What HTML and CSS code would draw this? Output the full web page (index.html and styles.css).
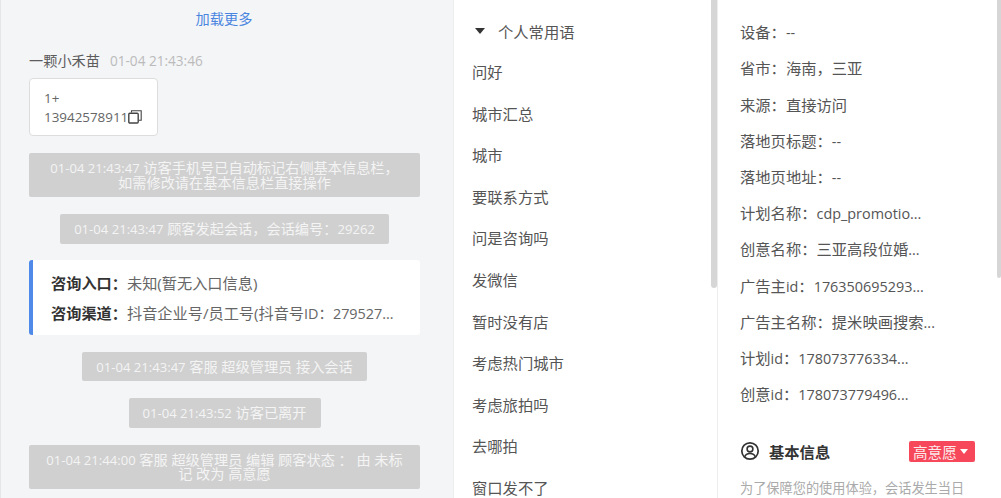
FILE: index.html
```html
<!DOCTYPE html>
<html lang="zh-CN">
<head>
<meta charset="utf-8">
<title>会话详情</title>
<link rel="stylesheet" href="styles.css">
</head>
<body>
<div class="app">
  <section class="chat">
    <div class="load-more">加载更多</div>
    <div class="msg-head"><span class="msg-name">一颗小禾苗</span><span class="msg-time">01-04 21:43:46</span></div>
    <div class="bubble">1+<br>13942578911<svg class="copy-icon" width="14" height="14" viewBox="0 0 14 14"><path d="M3.500 2.600V.7h9.700v9.500h-2.400" fill="none" stroke="#444" stroke-width="1.100"/><rect x=".8" y="3.200" width="9.400" height="9.800" rx="1" fill="#fff" stroke="#444" stroke-width="1.400"/></svg></div>
    <div class="sys sys-first"><span class="ts">01-04 21:43:47</span> 访客手机号已自动标记右侧基本信息栏，<br>如需修改请在基本信息栏直接操作</div>
    <div class="sys"><span class="ts">01-04 21:43:47</span> 顾客发起会话，会话编号：<span class="ts">29262</span></div>
    <div class="info-card">
      <div class="info-row"><b>咨询入口：</b>未知(暂无入口信息)</div>
      <div class="info-row"><b>咨询渠道：</b>抖音企业号/员工号(抖音号<span class="num">ID：279527...</span></div>
    </div>
    <div class="sys"><span class="ts">01-04 21:43:47</span> 客服 超级管理员 接入会话</div>
    <div class="sys"><span class="ts">01-04 21:43:52</span> 访客已离开</div>
    <div class="sys"><span class="ts">01-04 21:44:00</span> 客服 超级管理员 编辑 顾客状态 ： 由 未标记 改为 高意愿</div>
  </section>

  <section class="phrases">
    <div class="phrase-head"><span class="caret"></span>个人常用语</div>
    <div class="phrase">问好</div>
    <div class="phrase">城市汇总</div>
    <div class="phrase">城市</div>
    <div class="phrase">要联系方式</div>
    <div class="phrase">问是咨询吗</div>
    <div class="phrase">发微信</div>
    <div class="phrase">暂时没有店</div>
    <div class="phrase">考虑热门城市</div>
    <div class="phrase">考虑旅拍吗</div>
    <div class="phrase">去哪拍</div>
    <div class="phrase">窗口发不了</div>
    <div class="scroll-thumb thumb-mid"></div>
  </section>

  <section class="details">
    <div class="field">设备：<span class="num">--</span></div>
    <div class="field">省市：海南，三亚</div>
    <div class="field">来源：直接访问</div>
    <div class="field">落地页标题：<span class="num">--</span></div>
    <div class="field">落地页地址：<span class="num">--</span></div>
    <div class="field">计划名称：<span class="num">cdp_promotio...</span></div>
    <div class="field">创意名称：三亚高段位婚<span class="num">...</span></div>
    <div class="field">广告主<span class="num">id</span>：<span class="num">176350695293...</span></div>
    <div class="field">广告主名称：提米映画搜索<span class="num">...</span></div>
    <div class="field">计划<span class="num">id</span>：<span class="num">178073776334...</span></div>
    <div class="field">创意<span class="num">id</span>：<span class="num">178073779496...</span></div>
    <div class="basic-head">
      <svg class="user-icon" width="20" height="20" viewBox="0 0 20 20"><circle cx="10" cy="10" r="8.200" fill="none" stroke="#333" stroke-width="1.700"/><circle cx="10" cy="8" r="2.900" fill="none" stroke="#333" stroke-width="1.600"/><path d="M4.800 15.800c.6-2.300 2.600-3.300 5.200-3.300s4.600 1 5.200 3.300" fill="none" stroke="#333" stroke-width="1.600"/></svg>
      <span class="basic-title">基本信息</span>
      <span class="tag">高意愿<span class="tag-caret"></span></span>
    </div>
    <div class="note">为了保障您的使用体验，会话发生当日</div>
    <div class="scroll-thumb thumb-right"></div>
  </section>
</div>
</body>
</html>
```

FILE: styles.css
```css
* { box-sizing: border-box; }
html, body { margin: 0; height: 100%; overflow: hidden; background: #fff; }
body { font-family: "Open Sans", "Noto Sans CJK SC", sans-serif; }
.app { display: flex; height: 498px; width: 1001px; }

.chat {
  width: 454px;
  height: 498px;
  flex: none;
  overflow: hidden;
  background: #f4f5f7;
  border-left: 1px solid #e6e6e6;
  border-right: 1px solid #eceeee;
  padding: 0 33px 0 28px;
  display: flex;
  flex-direction: column;
  align-items: center;
}
.load-more { font-size: 14.200px; line-height: 20px; margin-top: 9px; margin-right: 1px; color: #4a86e0; }
.msg-head { align-self: flex-start; margin-top: 22px; line-height: 20px; display: flex; gap: 10px; }
.msg-name { font-size: 14.200px; color: #5c5c5c; }
.msg-time { font-size: 13.600px; color: #bbb; }
.bubble {
  align-self: flex-start;
  width: 129px;
  height: 58px;
  margin-top: 7px;
  padding: 10px 0 0 14px;
  background: #fff;
  border: 1px solid #ddd;
  border-radius: 4px;
  font-size: 13.400px;
  line-height: 19px;
  color: #666;
  white-space: nowrap;
}
.copy-icon { vertical-align: -2px; }
.sys {
  max-width: 391px;
  margin-top: 17px;
  padding: 8px 14px 7px;
  background: #d0d0d0;
  border-radius: 2px;
  color: #f4f4f4;
  font-size: 14.200px;
  line-height: 14.500px;
  text-align: center;
}
.ts { font-size: 13.100px; }
.sys-first { width: 391px; }
.info-card {
  width: 391px;
  height: 75px;
  margin-top: 16px;
  padding: 8px 0 0 18px;
  background: #fff;
  border-left: 4px solid #4f8ae8;
  border-radius: 3px;
}
.info-row { font-size: 15.200px; line-height: 30px; color: #666; white-space: nowrap; }
.info-row b { color: #333; font-weight: 700; }

.phrases {
  position: relative;
  width: 263px;
  height: 498px;
  flex: none;
  overflow: hidden;
  padding: 10px 0 0 18px;
}
.phrase-head { display: flex; align-items: center; height: 42px; padding-left: 3px; font-size: 15.300px; color: #555; }
.caret {
  width: 0;
  height: 0;
  margin-right: 13px;
  border-left: 5.500px solid transparent;
  border-right: 5.500px solid transparent;
  border-top: 6px solid #333;
}
.phrase { height: 41.600px; line-height: 41.600px; font-size: 15.300px; color: #555; }
.num { font-size: 14.400px; }
.scroll-thumb { position: absolute; top: 0; background: #d6d6d6; border-radius: 0 0 3px 3px; }
.thumb-mid { right: 0; width: 6px; height: 288px; }
.thumb-right { right: 0; width: 4px; height: 278px; }

.details {
  position: relative;
  width: 284px;
  height: 498px;
  flex: none;
  overflow: hidden;
  border-left: 1px solid #ececec;
  padding: 14.300px 0 0 22px;
}
.field { height: 36.200px; line-height: 36.200px; font-size: 15.300px; color: #555; white-space: nowrap; }
.basic-head { display: flex; align-items: center; height: 24px; margin-top: 27px; padding-right: 26px; }
.user-icon { margin-right: 9px; }
.basic-title { font-size: 15.300px; font-weight: 700; color: #333; }
.tag {
  margin-left: auto;
  width: 66px;
  height: 21px;
  padding-left: 4px;
  display: flex;
  align-items: center;
  gap: 3px;
  background: #f6485a;
  border-radius: 2px;
  color: #fdeaea;
  font-size: 14.600px;
  white-space: nowrap;
}
.tag-caret {
  width: 0;
  height: 0;
  border-left: 4px solid transparent;
  border-right: 4px solid transparent;
  border-top: 5px solid #fff;
}
.note { margin-top: 15px; font-size: 13.200px; line-height: 20px; color: #aaa; white-space: nowrap; }
```
